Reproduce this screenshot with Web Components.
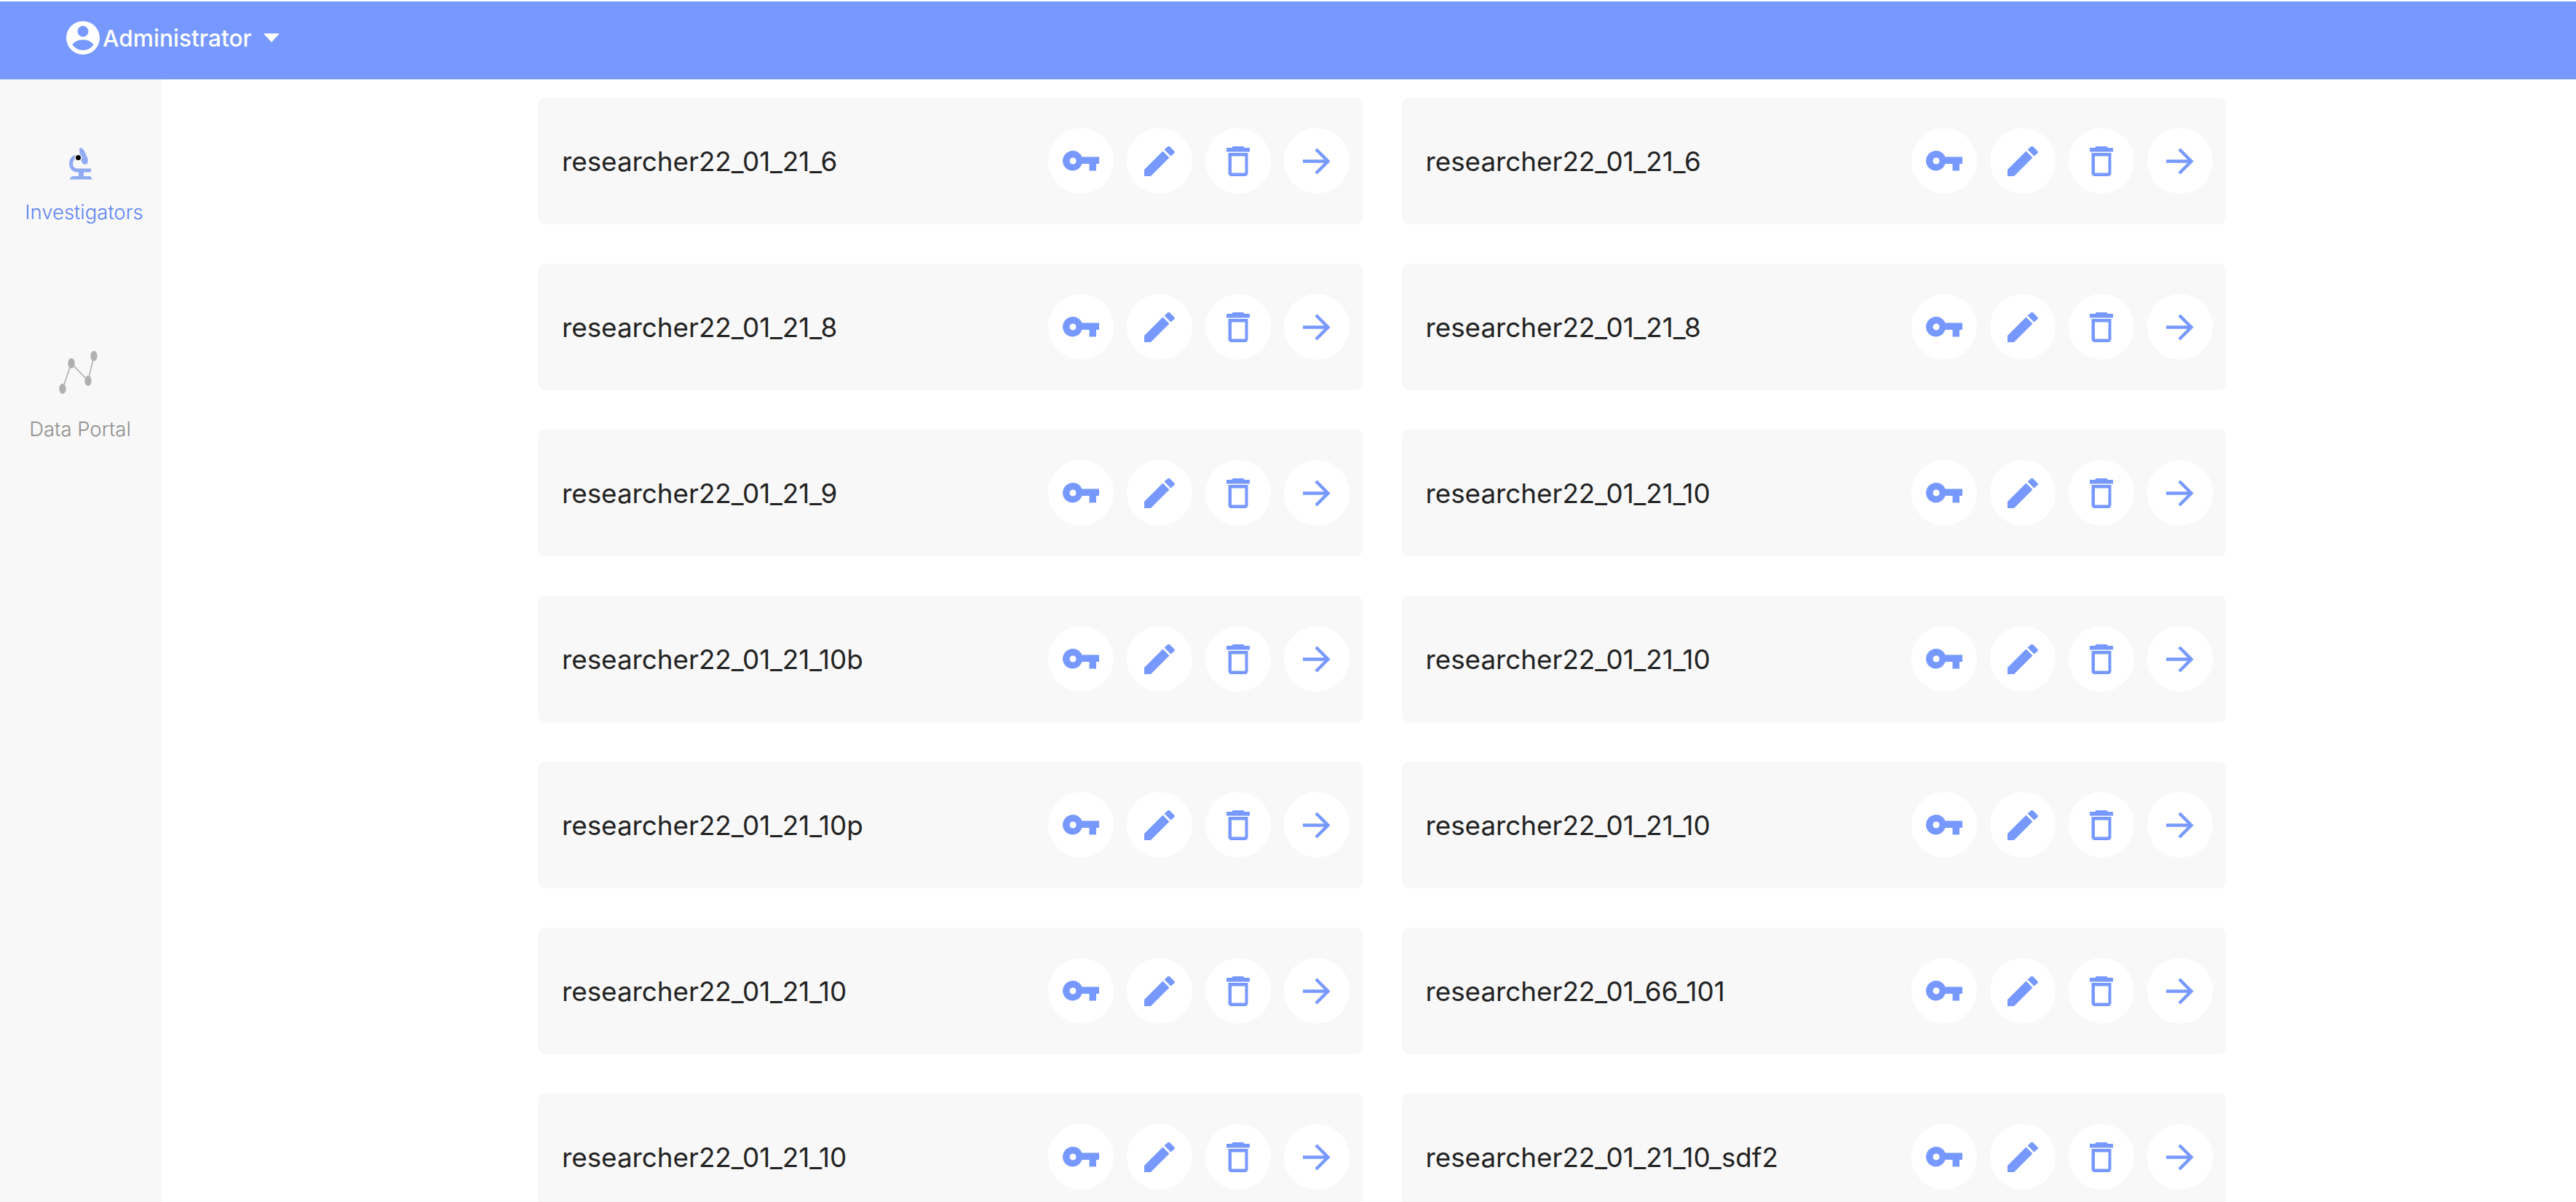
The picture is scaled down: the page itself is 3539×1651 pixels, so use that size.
<!doctype html>
<html>
<head>
<meta charset="utf-8">
<title>Investigators</title>
<style>
  html, body { margin: 0; height: 100%; overflow: hidden; background: #fff; }
  body { font-family: Inter, "Liberation Sans", sans-serif; }
</style>
</head>
<body>
<app-shell>
  <top-bar slot="top"></top-bar>
  <side-nav slot="side">
    <nav-item label="Investigators" active style="--shift: 9px; --label-gap: 25px">
      <svg viewBox="0 0 60 60" width="60" height="60">
        <path fill="#8fabf2" d="M23 14l3-1 3 3 3 6 3 7-1 6-5 1-3-4-2-7z"/>
        <path fill="none" stroke="#8fabf2" stroke-width="5" d="M18 25C13.500 27 11.500 31 11.500 35C11.500 40 15 44 20 44H39"/>
        <path fill="#8fabf2" d="M22 44h7v8h-7zM13 52h25l3 4.500H9z"/>
        <circle cx="21.500" cy="26.500" r="5" fill="#f8f8f8"/>
        <circle cx="21.500" cy="26.500" r="3.500" fill="#000"/>
      </svg>
    </nav-item>
    <nav-item label="Data Portal" style="--shift: -2px; --label-gap: 31px">
      <svg viewBox="0 0 60 62" width="60" height="62">
        <path fill="none" stroke="#b0b0b0" stroke-width="1.600" d="M6 54 L18 19 L41 43 L49 9"/>
        <ellipse cx="6" cy="54" rx="4.700" ry="7" fill="#b0b0b0"/>
        <ellipse cx="18" cy="19" rx="4.700" ry="7" fill="#b0b0b0"/>
        <ellipse cx="41" cy="43" rx="4.700" ry="7" fill="#b0b0b0"/>
        <ellipse cx="49" cy="9" rx="4.700" ry="7" fill="#b0b0b0"/>
      </svg>
    </nav-item>
  </side-nav>
  <researcher-grid></researcher-grid>
</app-shell>

<template id="tpl-shell">
  <style>
    :host { display: grid; grid-template-columns: 222px 1fr; grid-template-rows: 107px 1fr; height: 1651px; padding-top: 2px; box-sizing: border-box; overflow: hidden; }
    .top { grid-column: 1 / -1; }
    main { overflow: hidden; min-width: 0; }
  </style>
  <div class="top"><slot name="top"></slot></div>
  <slot name="side"></slot>
  <main><slot></slot></main>
</template>

<template id="tpl-top">
  <style>
    :host { display: flex; align-items: center; height: 107px; background: #7799ff; color: #fff; padding: 0 0 7px 91px; box-sizing: border-box; font-size: 31.700px; font-weight: 500; }
    svg { display: block; }
    span { margin-left: 4px; }
    .caret { width: 0; height: 0; border: 11.500px solid transparent; border-top: 12px solid #fff; border-bottom: 0; margin-left: 16px; }
  </style>
  <svg width="46" height="46" viewBox="0 0 46 46">
    <path fill="#fff" fill-rule="evenodd" d="M23 0a23 23 0 1 1 0 46a23 23 0 0 1 0-46zM23 6.500a7.500 7.500 0 1 0 0 15a7.500 7.500 0 0 0 0-15zM23 25.500c-6.500 0-12.500 3-14.500 7c3 4.500 8.500 7.500 14.500 7.500s11.500-3 14.500-7.500c-2-4-8-7-14.500-7z"/>
  </svg>
  <span>Administrator</span>
  <i class="caret"></i>
</template>

<template id="tpl-side">
  <style>
    :host { display: flex; flex-direction: column; align-items: center; background: #f8f8f8; padding-top: 81px; gap: 173px; }
  </style>
  <slot></slot>
</template>

<template id="tpl-nav">
  <style>
    :host { display: flex; flex-direction: column; align-items: center; gap: var(--label-gap); margin-left: var(--shift); font-size: 27.500px; font-weight: 300; line-height: 32px; color: #8f8f8f; }
    :host([active]) { color: #5f84f5; }
    div { display: flex; justify-content: center; }
  </style>
  <div><slot></slot></div>
  <span></span>
</template>

<template id="tpl-grid">
  <style>
    :host { display: grid; grid-template-columns: 1132.500px 1132.500px; column-gap: 54px; row-gap: 54px; padding: 25px 0 0 517px; }
  </style>
  <slot></slot>
</template>

<template id="tpl-card">
  <style>
    :host { display: flex; align-items: center; justify-content: space-between; height: 174px; box-sizing: border-box; padding: 0 18px 0 33px; background: #f8f8f8; border-radius: 9px; font-size: 36.800px; color: #222; }
    .actions { display: flex; gap: 18px; }
    button { width: 90px; height: 90px; border: 0; border-radius: 50%; background: #fff; padding: 0; display: flex; align-items: center; justify-content: center; }
    svg { display: block; }
  </style>
  <span></span>
  <div class="actions">
    <button><svg width="50" height="28" viewBox="0 0 50 28"><path fill="#7799ff" fill-rule="evenodd" d="M14 0c5.500 0 10 3 12.500 8.500H50V18h-4v9.500h-9.500V18h-10C24 24 19.500 27.500 14 27.500C6 27.500 0 21.500 0 14S6 0 14 0zM14 9.500a4.500 4.500 0 1 0 0 9a4.500 4.500 0 0 0 0-9z"/></svg></button>
    <button><svg width="42" height="41" viewBox="0 0 42 41"><path fill="#7799ff" d="M0 32L25.500 6.500l9 9L9 41H0zM27.500 4.500L32 .4c1-.9 2.300-.9 3.200 0l6 6c.9.900.9 2.200 0 3.100L36.500 13.500z"/></svg></button>
    <button><svg width="32" height="41" viewBox="0 0 32 41"><path fill="#7799ff" fill-rule="evenodd" d="M9 0h14l2 2h7v5.500H0V2h7zM2.500 9h27v28c0 2.200-1.800 4-4 4H6.500c-2.200 0-4-1.800-4-4zM7 13.500V36.500h18.500V13.500z"/></svg></button>
    <button><svg width="38" height="37" viewBox="0 0 38 37"><path fill="none" stroke="#7799ff" stroke-width="4.400" d="M0 18.500H34M18 2l16.500 16.500L18 35"/></svg></button>
  </div>
</template>

<script>
  function mount(el, id) {
    const root = el.attachShadow({ mode: 'open' })
    root.appendChild(document.getElementById(id).content.cloneNode(true))
    return root
  }

  class AppShell extends HTMLElement {
    constructor() { super(); mount(this, 'tpl-shell') }
  }
  class TopBar extends HTMLElement {
    constructor() { super(); mount(this, 'tpl-top') }
  }
  class SideNav extends HTMLElement {
    constructor() { super(); mount(this, 'tpl-side') }
  }
  class NavItem extends HTMLElement {
    constructor() { super(); this.root = mount(this, 'tpl-nav') }
    connectedCallback() { this.root.querySelector('span').textContent = this.getAttribute('label') }
  }
  class ResearcherCard extends HTMLElement {
    constructor() { super(); this.root = mount(this, 'tpl-card') }
    connectedCallback() { this.root.querySelector('span').textContent = this.getAttribute('name') }
  }
  class ResearcherGrid extends HTMLElement {
    constructor() { super(); mount(this, 'tpl-grid') }
    connectedCallback() {
      const names = [
        '6', '6', '8', '8', '9', '10', '10b', '10', '10p', '10', '10', '66_101', '10', '10_sdf2'
      ]
      names.forEach(n => {
        const card = document.createElement('researcher-card')
        card.setAttribute('name', n === '66_101' ? 'researcher22_01_66_101' : 'researcher22_01_21_' + n)
        this.appendChild(card)
      })
    }
  }

  customElements.define('app-shell', AppShell)
  customElements.define('top-bar', TopBar)
  customElements.define('side-nav', SideNav)
  customElements.define('nav-item', NavItem)
  customElements.define('researcher-card', ResearcherCard)
  customElements.define('researcher-grid', ResearcherGrid)
</script>
</body>
</html>
